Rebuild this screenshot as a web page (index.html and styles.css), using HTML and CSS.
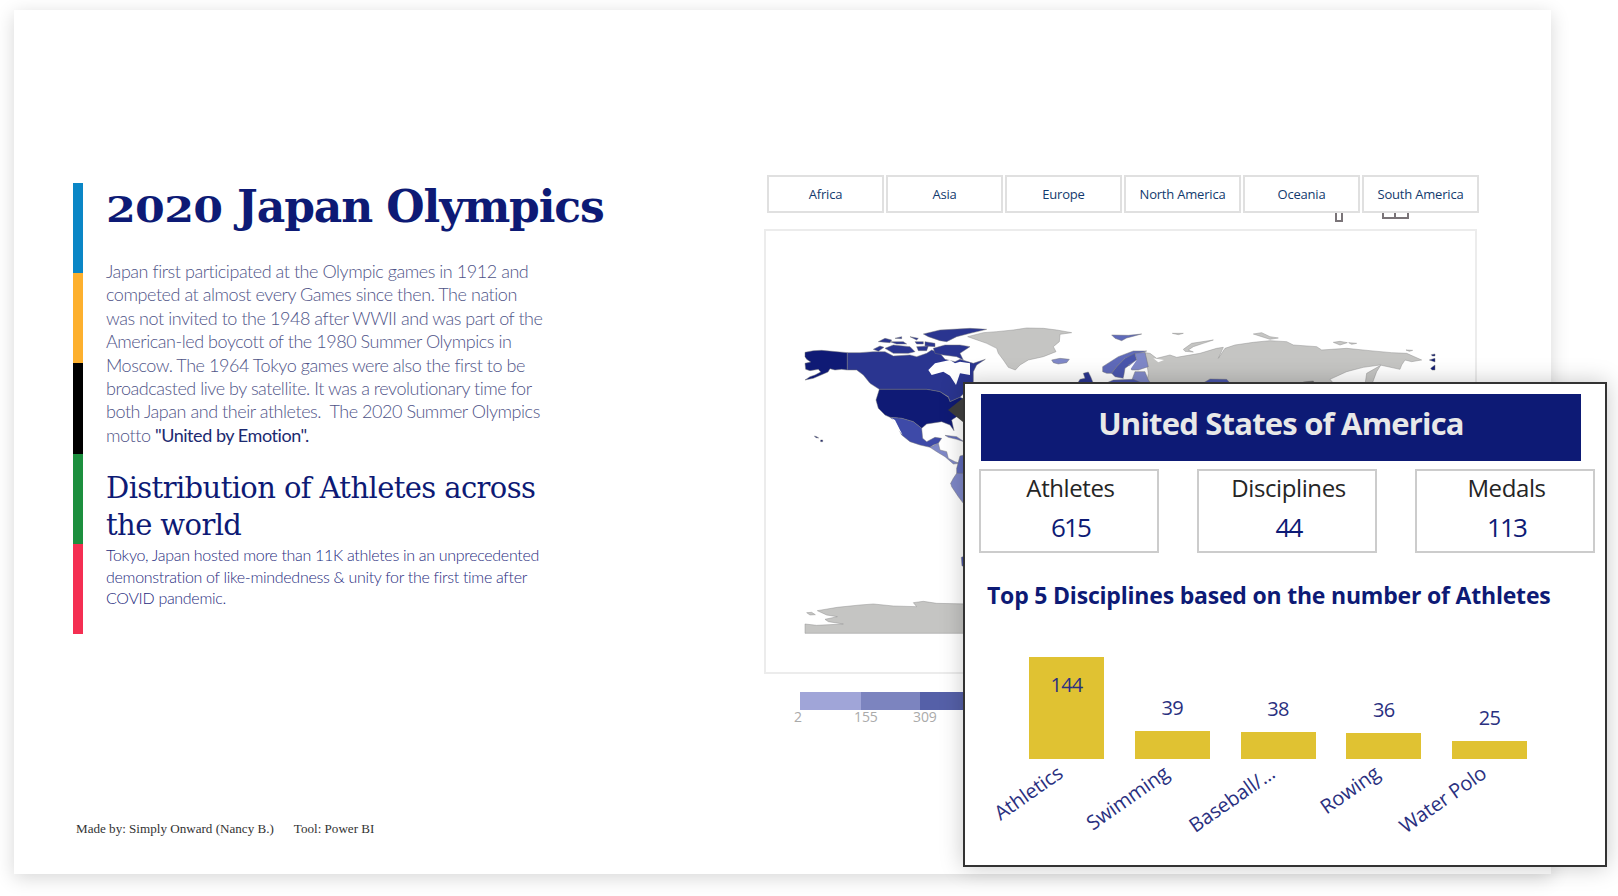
FILE: index.html
```html
<!DOCTYPE html>
<html lang="en">
<head>
<meta charset="utf-8">
<title>2020 Japan Olympics</title>
<link rel="stylesheet" href="styles.css">
</head>
<body>
<main class="page">
  <div class="columns">
    <section class="story">
      <div class="stripes">
        <span class="stripe s-blue"></span>
        <span class="stripe s-yellow"></span>
        <span class="stripe s-black"></span>
        <span class="stripe s-green"></span>
        <span class="stripe s-red"></span>
      </div>
      <div class="copy">
        <h1 class="title"><span class="oldstyle">2020</span> Japan Olympics</h1>
        <p class="intro">Japan first participated at the Olympic games in 1912 and<br>competed at almost every Games since then. The nation<br>was not invited to the 1948 after WWII and was part of the<br>American-led boycott of the 1980 Summer Olympics in<br>Moscow. The 1964 Tokyo games were also the first to be<br>broadcasted live by satellite. It was a revolutionary time for<br>both Japan and their athletes.&nbsp; The 2020 Summer Olympics<br>motto <span class="motto">"United by Emotion".</span></p>
        <h2 class="subtitle">Distribution of Athletes across<br>the world</h2>
        <p class="note">Tokyo, Japan hosted more than 11K athletes in an unprecedented<br>demonstration of like-mindedness &amp; unity for the first time after<br>COVID pandemic.</p>
      </div>
    </section>
    <section class="viz">
      <div class="slicer">
        <button class="chip">Africa</button>
        <button class="chip">Asia</button>
        <button class="chip">Europe</button>
        <button class="chip">North America</button>
        <button class="chip">Oceania</button>
        <button class="chip">South America</button>
      </div>
      <div class="stubs">
        <span class="stub stub-a"></span>
        <span class="stub stub-b"></span>
        <span class="stub stub-c"></span>
      </div>
      <div class="mapbox">
        <svg class="map" viewBox="766 231 709 441" aria-label="World map">
          <g transform="translate(760 310) scale(.33333)">
            <path class="c-navy" d="M135 127L160 122L185 121L262 128L262 180L245 178L225 180L210 176L204 186L190 192L160 205L135 210L150 200L165 195L182 186L175 178L150 182L137 178L135 160L152 156L140 148L135 140Z"/>
            <path class="c-dark" d="M262 128L300 128L340 125L375 125L400 138L450 135L470 140L500 130L515 120L540 130L555 148L585 155L600 148L640 160L676 148L650 165L640 185L640 215L625 240L612 250L600 262L570 275L565 260L540 245L500 238L358 238L330 220L310 195L290 180L262 180Z"/>
            <path class="c-white" d="M505 180L525 160L570 150L585 160L600 155L630 160L630 195L600 190L588 225L570 197L550 185L515 195Z"/>
            <path class="c-dark" d="M490 72L540 60L630 55L680 58L630 70L590 80L560 95L540 92L505 80Z"/>
            <path class="c-dark" d="M355 95L375 85L395 90L390 98Z"/>
            <path class="c-dark" d="M390 95L430 95L440 102L410 102Z"/>
            <path class="c-dark" d="M450 80L475 85L470 90Z"/>
            <path class="c-dark" d="M405 85L425 80L425 86Z"/>
            <path class="c-dark" d="M465 95L490 95L490 102L470 102Z"/>
            <path class="c-dark" d="M375 115L400 105L450 110L465 125L445 130L400 130Z"/>
            <path class="c-dark" d="M340 118L360 108L372 112L355 124Z"/>
            <path class="c-dark" d="M495 95L525 100L525 110L495 108Z"/>
            <path class="c-dark" d="M520 115L555 105L600 105L630 110L600 130L610 150L590 140L550 135L525 130Z"/>
            <path class="c-dark" d="M470 110L505 108L500 122L475 122Z"/>
            <path class="c-navy" d="M358 238L500 238L540 245L565 262L570 275L600 262L620 270L620 320L590 320L575 330L582 362L570 345L545 335L500 342L485 355L460 335L425 325L390 322L375 315L355 295L348 270Z"/>
            <path class="c-mid" d="M390 322L425 325L460 335L485 355L488 385L500 395L525 382L545 385L535 400L520 405L510 412L480 405L450 395L425 375L410 345L400 330Z"/>
            <path class="c-white" d="M395 325L405 330L420 360L428 375L415 360Z"/>
            <path class="c-light" d="M510 412L535 400L540 420L560 425L565 445L585 455L600 460L580 462L555 440L530 425Z"/>
            <path class="c-soft" d="M600 438L625 432L625 490L605 495L590 490L590 475Z"/>
            <path class="c-light" d="M590 490L625 490L625 590L610 580L595 560L575 530L572 520L580 505Z"/>
            <path class="c-soft" d="M555 376L590 380L612 395L590 388L565 382Z"/>
            <path class="c-navy" d="M182 390L188 390L188 395L182 395Z"/>
            <path class="c-navy" d="M163 378L170 380L176 384L168 383Z"/>
          </g>
          <g transform="translate(1000 310) scale(.33333)">
            <path class="c-land" d="M-97 80L-50 68L-10 65L40 60L80 54L130 55L170 60L215 68L180 73L178 95L160 110L168 125L130 140L85 150L60 165L46 180L25 172L10 150L-5 130L-10 115L-40 100Z"/>
            <path class="c-light" d="M155 150L180 145L208 148L200 158L175 162L160 158Z"/>
            <path class="c-soft" d="M335 75L385 76L425 72L395 80L380 84L365 92L345 85Z"/>
            <path class="c-land" d="M517 70L550 70L535 74Z"/>
            <path class="c-land" d="M550 118L575 100L640 90L610 100L580 110L565 120L580 126L555 124Z"/>
            <path class="c-land" d="M760 72L785 68L810 80L835 84L810 88L785 80Z"/>
            <path class="c-land" d="M1000 97L1020 94L1042 98L1020 105Z"/>
            <path class="c-land" d="M1046 98L1070 100L1055 103Z"/>
            <path class="c-land" d="M1218 120L1238 121L1228 124Z"/>
            <path class="c-land" d="M435 128L450 130L470 145L510 135L530 142L600 130L650 115L670 112L655 145L675 115L705 105L760 97L810 92L860 95L880 105L950 110L965 120L1040 115L1110 122L1175 128L1220 130L1265 150L1235 155L1215 150L1205 165L1200 178L1140 165L1090 172L1040 185L990 208L1005 225L440 225L445 190Z"/>
            <path class="c-white" d="M460 145L492 150L475 157Z"/>
            <path class="c-land" d="M1095 225L1100 190L1142 166L1130 185L1115 225Z"/>
            <path class="c-soft" d="M308 170L355 140L400 123L440 123L400 135L375 145L350 170L335 190L320 190L308 185Z"/>
            <path class="c-blue" d="M350 170L375 145L405 130L410 150L375 175L370 205L345 200L335 190Z"/>
            <path class="c-light" d="M405 130L435 127L445 170L415 180L395 180L385 165L410 150Z"/>
            <path class="c-white" d="M370 205L385 170L410 150L390 180L395 195Z"/>
            <path class="c-light" d="M405 185L435 185L445 210L455 225L390 225Z"/>
            <path class="c-blue" d="M305 225L340 210L400 208L440 225Z"/>
            <path class="c-dark" d="M250 190L265 186L272 200L282 225L230 225L240 208L255 205Z"/>
            <path class="c-blue" d="M600 225L630 207L680 208L695 225Z"/>
            <path class="c-grey" d="M910 216L940 213L945 225L905 225Z"/>
            <path class="c-navy" d="M1294 134L1305 132L1305 138L1297 138Z"/>
            <path class="c-navy" d="M1288 150L1305 145L1305 156Z"/>
            <path class="c-navy" d="M1292 175L1305 165L1305 180L1296 180Z"/>
          </g>
          <g transform="translate(760 500) scale(.33333)">
            <path class="c-land" d="M135 372L170 376L250 372L205 365L195 358L232 350L200 345L172 332L232 322L300 315L340 312L400 318L470 320L460 308L490 304L530 310L625 312L625 400L135 400Z"/>
            <path class="c-land" d="M140 338L155 337L166 344L150 345Z"/>
            <path class="c-blue" d="M604 172L625 165L625 200L606 198Z"/>
          </g>
        </svg>
      </div>
      <div class="legend">
        <div class="ramp">
          <span class="ramp-step r1"></span>
          <span class="ramp-step r2"></span>
          <span class="ramp-step r3"></span>
        </div>
        <div class="ticks">
          <span class="tick t1">2</span>
          <span class="tick t2">155</span>
          <span class="tick t3">309</span>
        </div>
      </div>
    </section>
  </div>
  <footer class="credit"><span>Made by: Simply Onward (Nancy B.)</span><span>Tool: Power BI</span></footer>

  <aside class="tooltip">
    <span class="pointer"></span>
    <header class="country">United States of America</header>
    <div class="kpis">
      <div class="kpi"><div class="kpi-label">Athletes</div><div class="kpi-value">615</div></div>
      <div class="kpi"><div class="kpi-label">Disciplines</div><div class="kpi-value">44</div></div>
      <div class="kpi"><div class="kpi-label">Medals</div><div class="kpi-value">113</div></div>
    </div>
    <h3 class="chart-title">Top 5 Disciplines based on the number of Athletes</h3>
    <div class="chart">
      <div class="col">
        <div class="bar bar-tall" style="height:102px"><span class="num">144</span></div>
        <span class="cat">Athletics</span>
      </div>
      <div class="col">
        <span class="num num-out">39</span>
        <div class="bar" style="height:28px"></div>
        <span class="cat">Swimming</span>
      </div>
      <div class="col">
        <span class="num num-out">38</span>
        <div class="bar" style="height:27px"></div>
        <span class="cat">Baseball/...</span>
      </div>
      <div class="col">
        <span class="num num-out">36</span>
        <div class="bar" style="height:26px"></div>
        <span class="cat">Rowing</span>
      </div>
      <div class="col">
        <span class="num num-out">25</span>
        <div class="bar" style="height:18px"></div>
        <span class="cat">Water Polo</span>
      </div>
    </div>
  </aside>
</main>
</body>
</html>
```
FILE: styles.css
```css
* { box-sizing: border-box; }
html, body { margin: 0; padding: 0; background: #fff; overflow: hidden; }
body { width: 1618px; height: 896px; padding: 10px 0 0 14px; font-family: "Lato", "Open Sans", sans-serif; }

.page {
  position: relative;
  width: 1537px;
  height: 864px;
  background: #fff;
  box-shadow: 0 4px 18px rgba(0, 0, 0, .16);
  padding-top: 165px;
}
.columns { display: flex; height: 630px; }

/* left column */
.story { display: flex; width: 750px; padding: 8px 0 0 59px; }
.stripes { display: flex; flex-direction: column; width: 10px; height: 451px; flex: none; }
.stripe { flex: 1; }
.s-blue { background: #0a86c6; }
.s-yellow { background: #fdb02e; }
.s-black { background: #000; }
.s-green { background: #1c8f3e; }
.s-red { background: #f42f52; }

.copy { margin-left: 23px; color: #0d1a75; }
.title {
  margin: 0;
  height: 77px;
  padding-top: 2px;
  font: 700 44px/44px "DejaVu Serif", "Liberation Serif", serif;
  letter-spacing: -1.1px;
  white-space: nowrap;
}
.oldstyle {
  display: inline-block;
  margin-right: 19px;
  font-size: 36px;
  letter-spacing: -.6px;
  transform: scaleX(1.19);
  transform-origin: left center;
}
.intro {
  margin: 0;
  font-weight: 300;
  font-size: 18px;
  line-height: 23.4px;
  letter-spacing: -.45px;
  color: #4f5488;
  white-space: nowrap;
}
.motto { color: #1c2a70; font-weight: 400; }
.subtitle {
  margin: 23px 0 0;
  font: 400 29px/37px "DejaVu Serif", "Liberation Serif", serif;
  letter-spacing: -.6px;
  white-space: nowrap;
}
.note {
  margin: 0;
  font-weight: 300;
  font-size: 16px;
  line-height: 21.3px;
  letter-spacing: -.3px;
  color: #1f2c80;
  white-space: nowrap;
}

/* right column */
.viz { width: 740px; }
.slicer { display: flex; gap: 2px; margin-left: 3px; }
.chip {
  width: 117px;
  height: 38px;
  padding: 0;
  background: #fff;
  border: 2px solid #e0e0e0;
  font: 400 13px "Open Sans", sans-serif;
  letter-spacing: -.2px;
  color: #123a6e;
  white-space: nowrap;
}
.stubs { position: relative; height: 16px; }
.stub { position: absolute; top: 0; border: 2px solid #7a7478; border-top: 0; }
.stub-a { left: 571px; width: 8px; height: 9px; }
.stub-b { left: 618px; width: 14px; height: 6px; }
.stub-c { left: 630px; width: 15px; height: 6px; }
.mapbox { width: 713px; height: 445px; border: 2px solid #ececec; background: #fff; }
.map { display: block; width: 100%; height: 100%; }
.map path { stroke: #777; stroke-width: 1.4; stroke-linejoin: round; }
.map .c-navy { fill: #0f1a75; }
.map .c-dark { fill: #2a3590; }
.map .c-mid { fill: #3e4aa8; }
.map .c-blue { fill: #4a56ac; }
.map .c-soft { fill: #5f6aba; }
.map .c-light { fill: #7f88c8; }
.map .c-land { fill: #c5c5c3; stroke: #8f8f8f; }
.map .c-grey { fill: #666; }
.map .c-white { fill: #fff; stroke: #fff; stroke-width: 0; }

.legend { margin: 18px 0 0 36px; }
.ramp { display: flex; height: 18px; width: 190px; }
.ramp-step { height: 18px; }
.r1 { width: 61px; background: #a0a5d8; }
.r2 { width: 59px; background: #7c84bf; }
.r3 { width: 70px; background: #5560a8; }
.ticks { position: relative; height: 16px; font: 400 14px/14px "Open Sans", sans-serif; letter-spacing: -.1px; color: #aaa; }
.tick { position: absolute; top: 0; }
.t1 { left: -6px; }
.t2 { left: 54px; }
.t3 { left: 113px; }

.credit {
  display: flex;
  gap: 20px;
  margin: 16px 0 0 62px;
  font: 400 13.1px/16px "Liberation Serif", serif;
  color: #333;
}

/* floating tooltip */
.tooltip {
  position: absolute;
  left: 949px;
  top: 372px;
  width: 644px;
  height: 485px;
  padding: 10px 0 0 16px;
  background: #fff;
  border: 2px solid #333;
  box-shadow: 0 0 22px rgba(0, 0, 0, .22);
}
.pointer {
  position: absolute;
  left: -17px;
  top: 14px;
  width: 0;
  height: 0;
  border-style: solid;
  border-width: 12px 15px 12px 0;
  border-color: transparent #3a3a3a transparent transparent;
}
.country {
  width: 600px;
  height: 67px;
  background: #0d1a75;
  color: #e8e8e8;
  font: 700 31px/59px "Open Sans", sans-serif;
  letter-spacing: -.8px;
  text-align: center;
}
.kpis { display: flex; justify-content: space-between; width: 616px; margin: 8px 0 0 -2px; }
.kpi { width: 180px; height: 84px; padding-left: 3px; border: 2px solid #ccc; text-align: center; }
.kpi-label { font: 400 24px/34px "Open Sans", sans-serif; letter-spacing: -.4px; color: #252525; }
.kpi-value { margin-top: 4px; font: 400 26px/36px "Open Sans", sans-serif; letter-spacing: -1.8px; color: #0d1a75; }
.chart-title {
  margin: 26px 0 0 6px;
  font: 700 23px/32px "Open Sans", sans-serif;
  letter-spacing: -.2px;
  color: #0d1a75;
  white-space: nowrap;
}
.chart {
  display: flex;
  align-items: flex-end;
  gap: 30.75px;
  height: 148px;
  margin-left: 48px;
}
.col { position: relative; display: flex; flex-direction: column; align-items: center; width: 75px; }
.bar { width: 75px; background: #e0c232; text-align: center; }
.bar-tall { padding-top: 15px; }
.num { display: block; font: 400 20px/26px "Open Sans", sans-serif; letter-spacing: -.8px; color: #2a3080; }
.num-out { margin-bottom: 10px; }
.cat {
  position: absolute;
  right: 51px;
  top: 100%;
  margin-top: 1px;
  font: 400 20px/26px "Open Sans", sans-serif;
  letter-spacing: -.2px;
  color: #2a3080;
  white-space: nowrap;
  transform: rotate(-35deg);
  transform-origin: right top;
}
```
